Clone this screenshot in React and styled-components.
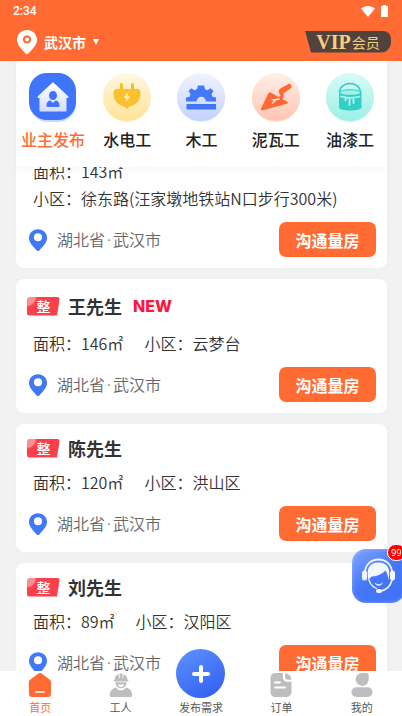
import React, { useLayoutEffect, useRef, useState } from "react";
import styled, { createGlobalStyle } from "styled-components";

const style = {
  "theme-color": "#ff6b33",
  "text-color": "#333",
  "text-color-light": "#666",
  "blue-color": "#3f78fb",
  "background-color": "#f2f2f2",
};

const GlobalStyle = createGlobalStyle`
  * {
    box-sizing: border-box;
  }
  html, body, #root {
    height: 100%;
    margin: 0;
  }
  body {
    overflow: hidden;
    font-family: "Noto Sans CJK SC", "Noto Sans", sans-serif;
    color: ${style["text-color"]};
    background: ${style["background-color"]};
  }
  button {
    padding: 0;
    border: 0;
    background: none;
    font-family: inherit;
    color: inherit;
    cursor: pointer;
  }
  a {
    color: inherit;
    text-decoration: none;
  }
  svg {
    display: block;
    flex: none;
  }
`;

const Page = styled.div`
  display: flex;
  flex-direction: column;
  height: 100%;
  overflow: hidden;
`;

const Header = styled.header`
  flex: none;
  background: ${style["theme-color"]};
  color: #fff;
`;

const StatusBar = styled.div`
  display: flex;
  align-items: center;
  justify-content: space-between;
  height: 22px;
  padding: 0 14px 0 13px;
  font: 500 12px/22px Roboto, sans-serif;
  .status-icons {
    display: flex;
    gap: 6px;
  }
`;

const HeaderBar = styled.div`
  display: flex;
  align-items: center;
  justify-content: space-between;
  height: 39px;
  padding: 0 11px 0 17px;
`;

const CityButton = styled.button`
  display: flex;
  align-items: center;
  gap: 7px;
  font-size: 14px;
  font-weight: 700;
  line-height: 22px;
`;

const VipButton = styled.button`
  display: flex;
  align-items: center;
  justify-content: center;
  gap: 1px;
  width: 86px;
  height: 22px;
  border-radius: 0 8px 11px 0;
  background: #51423b;
  clip-path: polygon(0 0, 100% 0, 100% 100%, 6px 100%);
  color: #f6cf7f;
  font-size: 14px;
  line-height: 22px;
  strong {
    font: 700 20px/22px "Liberation Serif", serif;
  }
`;

const Categories = styled.nav`
  position: relative;
  z-index: 1;
  display: grid;
  flex: none;
  grid-template-columns: repeat(5, 1fr);
  margin: 0 15px 0 16px;
  padding: 11px 0 16px;
  background: #fff;
  box-shadow: 0 2px 6px rgba(0, 0, 0, 0.04);
`;

const Category = styled.button`
  display: flex;
  flex-direction: column;
  align-items: center;
  gap: 5px;
  font-size: 16px;
  font-weight: 500;
  line-height: 24px;
  white-space: nowrap;
  color: ${(props) => (props.$active ? style["theme-color"] : "#222")};
`;

const List = styled.main`
  display: flex;
  flex: 1;
  flex-direction: column;
  gap: 11px;
  min-height: 0;
  padding: 0 15px 0 16px;
  overflow-y: auto;
  scrollbar-width: none;
`;

const Card = styled.article`
  flex: none;
  padding: 11px;
  border-radius: 8px;
  background: #fff;
  box-shadow: 0 0 10px rgba(0, 0, 0, 0.02);
`;

const CardHead = styled.div`
  display: flex;
  align-items: center;
  height: ${(props) => (props.$isNew ? 32 : 26)}px;
  margin-bottom: 8px;
  h2 {
    margin: 0 11px 0 8px;
    font-size: 18px;
    font-weight: 700;
    line-height: 26px;
  }
`;

const Tag = styled.span`
  width: 33px;
  height: 19px;
  border-radius: 3px;
  background: radial-gradient(circle at 0 0, #ff8c8e 8px, #fb3f4b 10px);
  clip-path: polygon(0 0, 100% 0, 30px 100%, 0 100%);
  color: #fff;
  font-size: 14px;
  font-weight: 500;
  line-height: 19px;
  text-align: center;
`;

const NewMark = styled.span`
  color: #fb1740;
  font: 800 16px/20px Inter, sans-serif;
`;

const Facts = styled.div`
  display: flex;
  flex-wrap: wrap;
  column-gap: 21px;
  padding-left: 6px;
  font-size: 16px;
  font-weight: 350;
  line-height: 27px;
`;

const CardFoot = styled.div`
  display: flex;
  align-items: center;
  gap: 10px;
  margin-top: 10px;
  padding-left: 2px;
  color: ${style["text-color-light"]};
  font-size: 16px;
  font-weight: 350;
  line-height: 24px;
`;

const Dot = styled.span`
  margin: 0 2px;
  font-family: "Noto Sans", sans-serif;
`;

const ContactButton = styled.button`
  width: 97px;
  height: 35px;
  margin-left: auto;
  border-radius: 7px;
  background: ${style["theme-color"]};
  color: #fff;
  font-size: 16px;
  font-weight: 700;
`;

const TabBar = styled.nav`
  position: relative;
  display: grid;
  flex: none;
  grid-template-columns: repeat(5, 1fr);
  grid-template-rows: 100%;
  height: 45px;
  background: #fff;
`;

const Tab = styled.a`
  display: flex;
  flex-direction: column;
  align-items: center;
  justify-content: flex-end;
  gap: ${(props) => (props.$raised ? 1 : 2)}px;
  padding-bottom: 1px;
  color: ${(props) => (props.$active ? style["theme-color"] : "#555")};
  font-size: 11px;
  line-height: 16px;
`;

const PublishIcon = styled.span`
  display: flex;
  flex: none;
  align-items: center;
  justify-content: center;
  width: 49px;
  height: 49px;
  border-radius: 50%;
  background: linear-gradient(150deg, #5d93ff, #2f5bf0);
`;

const ServiceButton = styled.button`
  position: fixed;
  right: -3px;
  bottom: 113px;
  width: 53px;
  height: 54px;
  border-radius: 14px;
  background: linear-gradient(145deg, #7fa5ff, #4677f9 50%, #3f70f6);
  box-shadow: inset 0 0 4px rgba(255, 255, 255, 0.3);
`;

const Badge = styled.span`
  position: absolute;
  top: -5px;
  left: 35px;
  height: 17px;
  padding: 0 4px 0 3px;
  border: 1px solid #fff;
  border-radius: 9px;
  background: #f00;
  color: #fff;
  font: 400 9px/15px "Noto Sans", sans-serif;
`;

const PinIcon = ({ width, height, color, hole }) => (
  <svg width={width} height={height} viewBox="0 0 20 24">
    <path
      fill={color}
      d="M10 0C4.400 0 0 4.300 0 9.800c0 4.300 2.800 7.600 7.600 12.800l1 1c.8.8 2 .8 2.800 0l1-1C17.200 17.400 20 14.100 20 9.800 20 4.300 15.600 0 10 0z"
    />
    {hole}
  </svg>
);

const Disc = ({ id, from, to, children }) => (
  <svg width="50" height="50" viewBox="0 0 50 50">
    <defs>
      <linearGradient id={id} x1="0" y1="0" x2="0" y2="1">
        <stop offset="0" stopColor={from} />
        <stop offset="1" stopColor={to} />
      </linearGradient>
    </defs>
    <circle cx="25" cy="26" r="24" fill={to} opacity=".5" />
    <circle cx="25" cy="25" r="24" fill={`url(#${id})`} />
    {children}
  </svg>
);

const OwnerIcon = () => (
  <svg width="50" height="50" viewBox="0 0 50 50">
    <defs>
      <linearGradient id="house" x1="0" y1="0" x2="0" y2="1">
        <stop offset="0" stopColor="#fff" />
        <stop offset="1" stopColor="#d3dfff" />
      </linearGradient>
    </defs>
    <rect x="2" y="3" width="46" height="47" rx="18" fill="#c9d8ff" />
    <rect x="1" y="1" width="47" height="47" rx="18" fill="#3f74fb" />
    <path
      d="M25 11.500 39.500 25H37.500v13.500H12.500V25h-2z"
      fill="url(#house)"
      stroke="url(#house)"
      strokeWidth="2"
      strokeLinejoin="round"
    />
    <ellipse cx="25" cy="23.500" rx="4" ry="4.500" fill="#3f74fb" />
    <path
      d="M18.500 33.500c0-3 1.500-5 4-5l2.500 2.500 2.500-2.500c2.500 0 4 2 4 5 0 1-.5 1.500-1.500 1.500H20c-1 0-1.500-.5-1.500-1.500z"
      fill="#3f74fb"
    />
  </svg>
);

const PlugIcon = () => (
  <Disc id="plug" from="#fff8e2" to="#ffe396">
    <path d="M19.500 12.500v6M30.500 12.500v6" stroke="#f9bd24" strokeWidth="3" strokeLinecap="round" />
    <path
      d="M14.500 17h21c2 0 3 2 3 4 0 7-3.500 11.500-9.500 13-1.500.4-2 1-4 3-2-2-2.500-2.600-4-3-6-1.500-9.500-6-9.500-13 0-2 1-4 3-4z"
      fill="#fbc02d"
    />
    <path d="m26 20.500-4.500 5.500h3L23.500 30l5-5.500h-3z" fill="#fff0bd" />
  </Disc>
);

const SawIcon = () => (
  <Disc id="saw" from="#f0f4ff" to="#c3d2ff">
    <path
      d="M10 29.500v-4l3.500-.8 1-2.500-2-3.200 2.800-2.800 3.200 2 2.500-1 .9-3.700h6.200l.9 3.700 2.500 1 3.200-2 2.800 2.800-2 3.200 1 2.500 3.500.8v4H30a4.700 4.700 0 0 0-9.400 0z"
      fill="#4479fa"
    />
    <rect x="10.500" y="32" width="29.500" height="5.500" fill="#3e75fa" />
  </Disc>
);

const TrowelIcon = () => (
  <Disc id="trowel" from="#ffefe9" to="#ffc5b1">
    <path
      d="M20.500 21 36 29.500c1.200.8 1 1.900-.3 2.300L12 38.300c-1.800.4-2.500-.5-1.800-2.100l6.900-14.200c.7-1.400 2-1.800 3.400-1z"
      fill="#ff6734"
    />
    <path
      d="M28.500 26.500c3-1.500 3.500-3 1.700-5.300-1.300-1.700-.7-2.900.8-3.600l4-2"
      fill="none"
      stroke="#ff6734"
      strokeWidth="3.500"
      strokeLinecap="round"
    />
    <path d="m31.500 19 6.500-4.500" stroke="#ff6734" strokeWidth="5" strokeLinecap="round" />
    <path d="m28.500 27-6.500 1 2 1-3 2.500" fill="none" stroke="#fff0e9" strokeWidth="1.300" />
  </Disc>
);

const BucketIcon = () => (
  <Disc id="bucket" from="#d7fbf6" to="#9cf0e7">
    <path d="M14.500 20c1-11.500 20-11.500 21 0" fill="none" stroke="#2fcac3" strokeWidth="1.500" />
    <path d="M14 20.500c0-4.500 22.500-4.500 22.500 0v15c0 4-22.500 4-22.500 0z" fill="#33cec6" />
    <ellipse cx="25.200" cy="20.500" rx="10" ry="2.300" fill="#a3f1e8" />
    <path
      d="M16 24.500c5 1.700 13.500 1.700 18.500 0M20.500 25v3.500M24.500 25.500v7.500M28.500 25.500V31"
      fill="none"
      stroke="#b8f5ee"
      strokeWidth="1.800"
      strokeLinecap="round"
    />
  </Disc>
);

const HomeIcon = () => (
  <svg width="24" height="24" viewBox="0 0 24 24">
    <path
      d="M10 .8c1.300-1 2.700-1 4 0l7.800 6c1 .8 1.400 1.600 1.200 2.800V21c0 2-1 3-3 3H4c-2 0-3-1-3-3L.8 9.600c0-1.200.4-2 1.400-2.800z"
      fill={style["theme-color"]}
    />
    <path d="M8 19h8" stroke="#fff" strokeWidth="1.500" strokeLinecap="round" />
  </svg>
);

const WorkerIcon = () => (
  <svg width="24" height="24" viewBox="0 0 24 24" fill="#bebebe">
    <path d="M5.500 7C5.500 3.800 7 2 9.500 1.200L10 5h.8L10.500.5h3.200L13.300 5h.8l.5-3.800C17 2 18.500 3.800 18.500 7l1 .5v1h-15v-1z" />
    <path d="M6.500 9.300h11c0 3.500-2 6-5.500 6s-5.500-2.500-5.500-6z" />
    <path d="M7 14.500c1.500 2 3 2.800 5 2.800s3.500-.8 5-2.800c4.500 1.300 6.200 4 6.200 7.500 0 1.500-.7 2-2 2H2.800c-1.300 0-2-.5-2-2 0-3.500 1.700-6.200 6.200-7.500z" />
    <path d="M9 11.200c2 .6 4 .6 6 0-.5 2.200-1.500 2.800-3 2.800s-2.500-.6-3-2.800z" fill="#fff" />
  </svg>
);

const OrderIcon = () => (
  <svg width="24" height="24" viewBox="0 0 24 24">
    <path
      d="M7 0h7v4.500C14 7 15.500 8.800 18.500 8.800h4V18c0 4-2 6-6 6H7c-4 0-5.500-2-5.500-6V6c0-4 1.500-6 5.500-6z"
      fill="#bebebe"
    />
    <path d="M16 .3c3.800.3 6 2.700 6.500 6.500h-3.300C17 6.800 16 5.800 16 3.800z" fill="#bebebe" />
    <path d="M6 9.500h5M6 14.500h10" stroke="#fff" strokeWidth="1.800" strokeLinecap="round" />
  </svg>
);

const MineIcon = () => (
  <svg width="24" height="24" viewBox="0 0 24 24" fill="#bebebe">
    <path d="M12 0h4.500C18 0 18.700.8 18.700 2v4.300a6.500 6.500 0 0 1-13 .2C5.700 2.800 8.500 0 12 0z" />
    <rect x="1.500" y="14.300" width="21" height="9.700" rx="4.800" />
  </svg>
);

const PublishTabIcon = () => (
  <PublishIcon>
    <svg width="18" height="18" viewBox="0 0 18 18">
      <path d="M9 2v14M2 9h14" stroke="#fff" strokeWidth="4" strokeLinecap="round" />
    </svg>
  </PublishIcon>
);

const AgentIcon = () => (
  <svg width="53" height="54" viewBox="0 0 53 54">
    <path d="M13 24C13 6 40 6 40 24" fill="none" stroke="#f1f6ff" strokeWidth="1.800" />
    <path
      d="M16.500 32C14 20 17 13.500 26.500 13.500S39 20 36.500 31c-.5-4-1.500-7.500-3-9.500-4 4-8 5.500-13.500 6-1.500.5-2.500 2-3.500 4.500z"
      fill="#f1f6ff"
    />
    <rect x="10" y="21.500" width="5" height="10" rx="2.500" fill="#f1f6ff" />
    <rect x="38" y="21.500" width="5" height="10" rx="2.500" fill="#f1f6ff" />
    <path d="M17 31c1.500 5 4.500 7.500 8 8.500" fill="none" stroke="#f1f6ff" strokeWidth="1.300" />
    <path d="M40 31c-1.500 6-5.500 10-11.500 11" fill="none" stroke="#f1f6ff" strokeWidth="1.600" />
    <rect x="24" y="40" width="6" height="4" rx="2" fill="#f1f6ff" />
    <path d="M22.500 33.500c3 2.500 6 2.500 8.500-.5-1 4.500-7 5-8.500.5z" fill="#f1f6ff" />
  </svg>
);

const categories = [
  { name: "业主发布", Icon: OwnerIcon },
  { name: "水电工", Icon: PlugIcon },
  { name: "木工", Icon: SawIcon },
  { name: "泥瓦工", Icon: TrowelIcon },
  { name: "油漆工", Icon: BucketIcon },
];

const orders = [
  { id: 1, area: "143㎡", community: "徐东路(汪家墩地铁站N口步行300米)" },
  { id: 2, name: "王先生", isNew: true, area: "146㎡", community: "云梦台" },
  { id: 3, name: "陈先生", area: "120㎡", community: "洪山区" },
  { id: 4, name: "刘先生", area: "89㎡", community: "汉阳区" },
];

const tabs = [
  { name: "首页", Icon: HomeIcon },
  { name: "工人", Icon: WorkerIcon },
  { name: "发布需求", Icon: PublishTabIcon, raised: true },
  { name: "订单", Icon: OrderIcon },
  { name: "我的", Icon: MineIcon },
];

const OrderCard = ({ order }) => {
  const { name, isNew, area, community } = order;
  return (
    <Card>
      {name && (
        <CardHead $isNew={isNew}>
          <Tag>整</Tag>
          <h2>{name}</h2>
          {isNew && <NewMark>NEW</NewMark>}
        </CardHead>
      )}
      <Facts>
        <span>面积：{area}</span>
        <span>小区：{community}</span>
      </Facts>
      <CardFoot>
        <PinIcon
          width={18}
          height={22}
          color={style["blue-color"]}
          hole={<circle cx="10" cy="9" r="4.500" fill="#fff" />}
        />
        <span>
          湖北省<Dot>·</Dot>武汉市
        </span>
        <ContactButton type="button">沟通量房</ContactButton>
      </CardFoot>
    </Card>
  );
};

const App = () => {
  const list = useRef();
  const [current, setCurrent] = useState(0);

  // open the list just past the first card's top edge
  useLayoutEffect(() => {
    list.current.scrollTop = 20;
  }, []);

  return (
    <Page>
      <GlobalStyle />
      <Header>
        <StatusBar>
          <span>2:34</span>
          <span className="status-icons">
            <svg width="14" height="12" viewBox="0 0 14 12" fill="#fff">
              <path d="M7 12 0 3.500C4 0 10 0 14 3.500z" />
            </svg>
            <svg width="7" height="12" viewBox="0 0 7 12" fill="#fff">
              <path d="M2 0h3v1h2v11H0V1h2z" />
            </svg>
          </span>
        </StatusBar>
        <HeaderBar>
          <CityButton type="button">
            <PinIcon
              width={20}
              height={24}
              color="#fff"
              hole={
                <circle
                  cx="10"
                  cy="9.500"
                  r="3"
                  fill="none"
                  stroke={style["theme-color"]}
                  strokeWidth="2"
                />
              }
            />
            武汉市
            <svg width="6" height="6" viewBox="0 0 6 6" fill="#fff">
              <path d="M0 0h6L3 6z" />
            </svg>
          </CityButton>
          <VipButton type="button">
            <strong>VIP</strong>会员
          </VipButton>
        </HeaderBar>
      </Header>

      <Categories>
        {categories.map(({ name, Icon }, index) => (
          <Category
            key={name}
            type="button"
            $active={index === current}
            onClick={() => setCurrent(index)}
          >
            <Icon />
            {name}
          </Category>
        ))}
      </Categories>

      <List ref={list}>
        {orders.map((order) => (
          <OrderCard key={order.id} order={order} />
        ))}
      </List>

      <TabBar>
        {tabs.map(({ name, Icon, raised }, index) => (
          <Tab key={name} href="#" $active={index === 0} $raised={raised}>
            <Icon />
            {name}
          </Tab>
        ))}
      </TabBar>

      <ServiceButton type="button" aria-label="客服">
        <AgentIcon />
        <Badge>99</Badge>
      </ServiceButton>
    </Page>
  );
};

export default React.memo(App);
